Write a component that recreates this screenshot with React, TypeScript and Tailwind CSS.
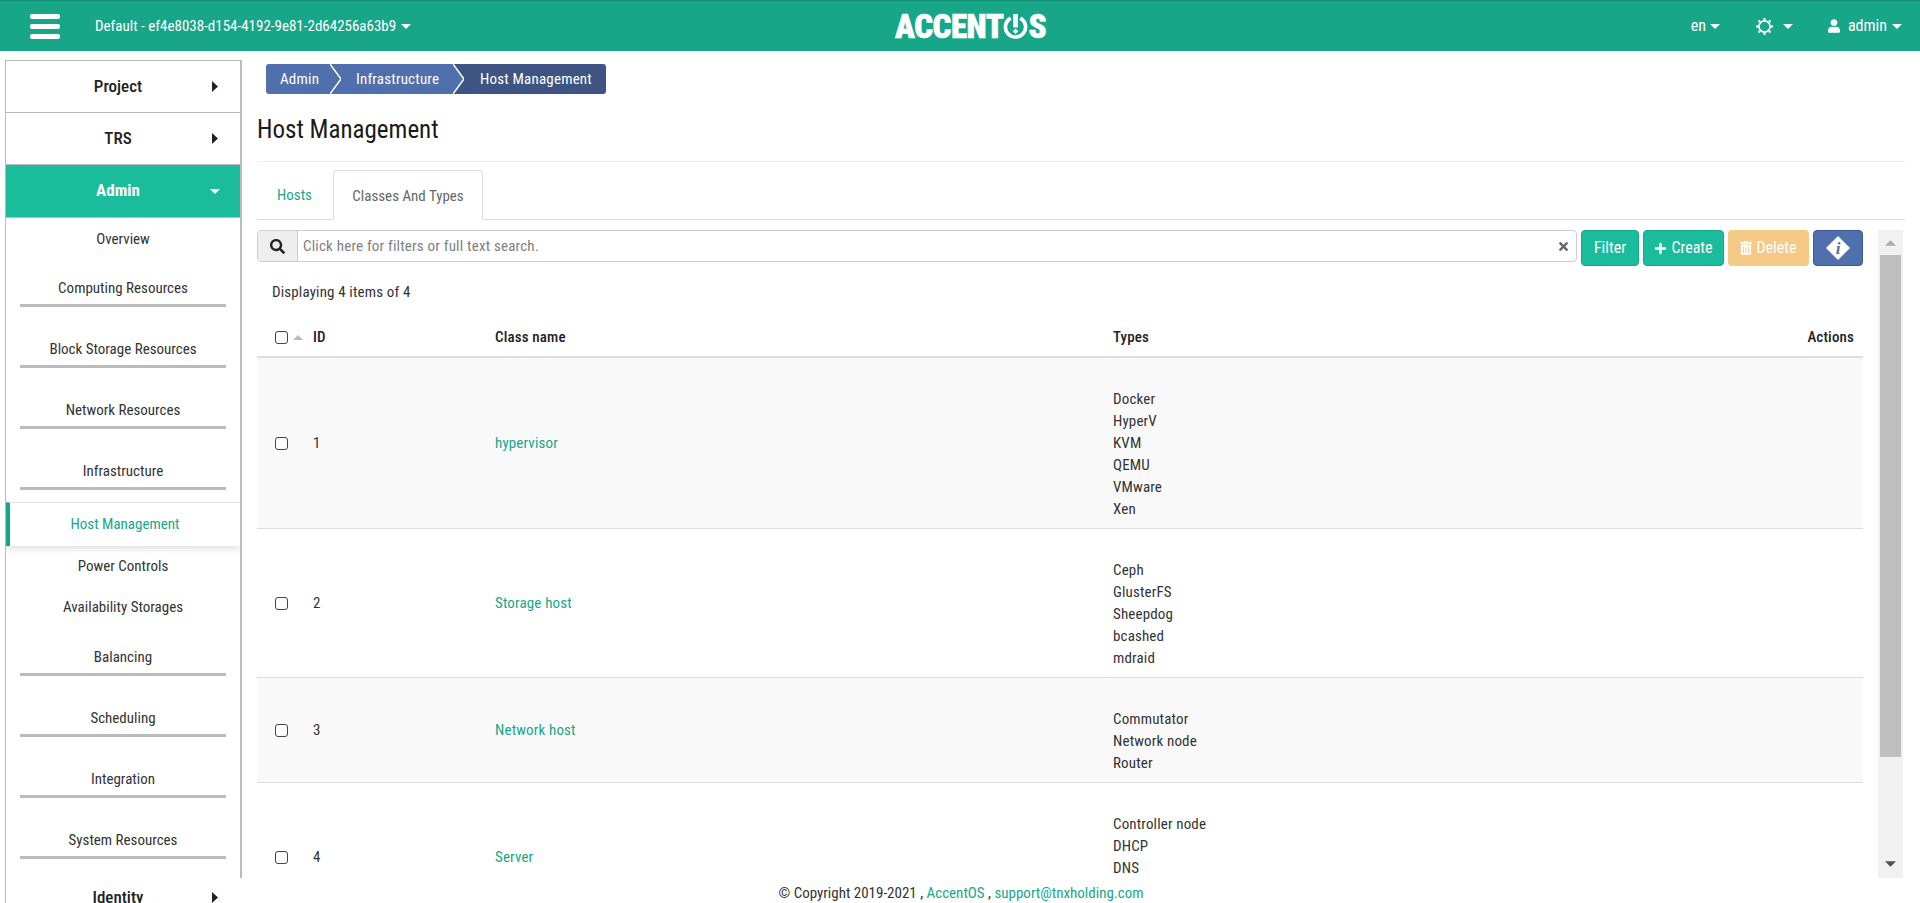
import React from "react";
import { FaSearch, FaTimes, FaPlus, FaTrashAlt, FaUser } from "react-icons/fa";

function Caret({ dir = "down", className = "" }: { dir?: "down" | "right" | "up"; className?: string }) {
  if (dir === "right")
    return (
      <svg width="6" height="11" viewBox="0 0 6 11" className={className}>
        <polygon points="0,0 6,5.5 0,11" fill="currentColor" />
      </svg>
    );
  return (
    <svg width="10" height="5" viewBox="0 0 10 5" className={className}>
      <polygon points={dir === "down" ? "0,0 10,0 5,5" : "0,5 10,5 5,0"} fill="currentColor" />
    </svg>
  );
}

function Check() {
  return <span className="block w-[13px] h-[13px] border border-[#444] rounded-[3px] bg-white" />;
}

function Top({ label, open, active, tall }: { label: string; open?: boolean; active?: boolean; tall?: boolean }) {
  return (
    <div
      className={`flex items-center ${tall ? "h-[53px]" : "h-[52px]"} shrink-0 border-b border-[#bbb] text-[17px] ${
        active ? "bg-[#1abc9c] text-white font-bold" : "bg-white text-[#222] font-medium"
      }`}
    >
      <span className="w-[180px] ml-[22px] text-center">{label}</span>
      {open ? <Caret dir="down" className="ml-[2px]" /> : <Caret dir="right" className="ml-[4px]" />}
    </div>
  );
}

function Plain({ label, first }: { label: string; first?: boolean }) {
  return (
    <div className={`h-[41px] shrink-0 ${first ? "pt-[11px]" : "pt-[10px]"} text-center text-[15px] leading-[20px] text-[#333]`}>
      {label}
    </div>
  );
}

function Ruled({ label, tight }: { label: string; tight?: boolean }) {
  return (
    <div
      className={`h-[48px] shrink-0 ${tight ? "mb-[12px]" : "mb-[13px]"} mx-[14px] pt-[19px] text-center text-[15px] leading-[20px] text-[#333] flex flex-col`}
    >
      <span>{label}</span>
      <span className="block h-[3px] bg-[#bbb] mt-[6px]" />
    </div>
  );
}

function Sidebar() {
  return (
    <aside className="ml-[5px] mt-[9px] w-[237px] shrink-0 border-l border-t border-r-2 border-[#bbb] overflow-hidden flex flex-col">
      <Top label="Project" />
      <Top label="TRS" />
      <Top label="Admin" open active tall />
      <Plain label="Overview" first />
      <Ruled label="Computing Resources" />
      <Ruled label="Block Storage Resources" />
      <Ruled label="Network Resources" />
      <Ruled label="Infrastructure" tight />
      <div className="h-[44px] shrink-0 border-l-[4px] border-l-[#18a689] border-t border-t-[#e5e5e5] shadow-[0_3px_6px_rgba(0,0,0,0.12)] flex items-center justify-center text-[15px] text-[#18a689]">
        Host Management
      </div>
      <Plain label="Power Controls" />
      <Plain label="Availability Storages" />
      <Ruled label="Balancing" />
      <Ruled label="Scheduling" />
      <Ruled label="Integration" />
      <Ruled label="System Resources" />
      <Top label="Identity" />
    </aside>
  );
}

function Chevron({ left, rightClass }: { left: string; rightClass: string }) {
  return (
    <svg width="11" height="30" viewBox="0 0 11 30" className={`block shrink-0 ${rightClass}`}>
      <polygon points="0,0 11,15 0,30" fill={left} />
      <polyline points="0,0 11,15 0,30" fill="none" stroke="#fff" strokeWidth="1.5" />
    </svg>
  );
}

function Sun() {
  const ticks = [0, 45, 90, 135, 180, 225, 270, 315];
  return (
    <svg width="17" height="17" viewBox="0 0 17 17" className="ml-[36px]">
      <circle cx="8.5" cy="8.5" r="5.6" fill="none" stroke="#fff" strokeWidth="1.7" />
      {ticks.map((a) => (
        <rect key={a} x="7.5" y="0" width="2" height="2.2" fill="#fff" transform={`rotate(${a} 8.5 8.5)`} />
      ))}
    </svg>
  );
}

const rows = [
  { id: 1, name: "hypervisor", types: ["Docker", "HyperV", "KVM", "QEMU", "VMware", "Xen"] },
  { id: 2, name: "Storage host", types: ["Ceph", "GlusterFS", "Sheepdog", "bcashed", "mdraid"] },
  { id: 3, name: "Network host", types: ["Commutator", "Network node", "Router"] },
  { id: 4, name: "Server", types: ["Controller node", "DHCP", "DNS", "\u00a0", "\u00a0"] },
];

export default function App() {
  return (
    <div className="h-[903px] w-[1920px] overflow-hidden flex flex-col bg-white [font-family:Roboto,sans-serif] font-stretch-condensed">
      <header className="h-[51px] shrink-0 bg-[#18a689] border-t border-[#149177] text-white flex items-center">
        <div className="w-[895px] shrink-0 flex items-center pl-[30px]">
          <div className="w-[30px] flex flex-col gap-[5px]">
            <span className="block h-[5px] bg-white rounded-[2px]" />
            <span className="block h-[5px] bg-white rounded-[2px]" />
            <span className="block h-[5px] bg-white rounded-[2px]" />
          </div>
          <span className="ml-[35px] text-[15px]">Default - ef4e8038-d154-4192-9e81-2d64256a63b9</span>
          <Caret className="ml-[5px]" />
        </div>
        <div className="flex items-center text-[33px] leading-none font-black tracking-[-0.5px] [-webkit-text-stroke:0.5px_white]">
          <span>ACCENT</span>
          <svg width="25" height="25" viewBox="0 0 26 26" className="shrink-0">
            <path d="M8 4.2A10.5 10.5 0 1 0 18 4.2" fill="none" stroke="#fff" strokeWidth="3.8" />
            <rect x="10.6" y="0" width="4.8" height="14" fill="#fff" />
            <rect x="11" y="16" width="4" height="4" transform="rotate(45 13 18)" fill="#fff" />
          </svg>
          <span>S</span>
        </div>
        <div className="flex-1 flex items-center justify-end">
          <span className="text-[16px]">en</span>
          <Caret className="ml-[4px]" />
          <Sun />
          <Caret className="ml-[10px]" />
          <FaUser className="ml-[35px] w-[12px] h-[14px]" />
          <span className="ml-[8px] text-[16px]">admin</span>
          <Caret className="ml-[5px] mr-[18px]" />
        </div>
      </header>

      <div className="flex-1 min-h-0 flex">
        <Sidebar />
        <div className="flex-1 min-w-0 flex flex-col">
          <div className="flex-1 min-h-0 flex flex-col pl-[15px] pr-[15px]">
            <nav className="mt-[13px] ml-[9px] flex h-[30px] w-fit text-[15px] leading-[30px] text-white tracking-[0.2px]">
              <span className="bg-[#4f6fad] rounded-l-[3px] pl-[14px] w-[64px]">Admin</span>
              <Chevron left="#4f6fad" rightClass="bg-[#4f6fad]" />
              <span className="bg-[#4f6fad] pl-[15px] w-[112px]">Infrastructure</span>
              <Chevron left="#4f6fad" rightClass="bg-[#3e5584]" />
              <span className="bg-[#3e5584] rounded-r-[3px] pl-[16px] pr-[14px]">Host Management</span>
            </nav>
            <h1 className="mt-[21px] h-[30px] text-[25px] leading-[30px] text-[#1a1a1a] font-normal">Host Management</h1>
            <div className="mt-[16px] border-t border-[#eee]" />
            <div className="mt-[8px] h-[50px] border-b border-[#ddd] flex items-end text-[15px] shrink-0">
              <span className="w-[76px] h-[50px] leading-[52px] pl-[20px] text-[#18a689]">Hosts</span>
              <span className="w-[150px] h-[50px] -mb-[1px] leading-[50px] text-center bg-white border border-[#ddd] border-b-white rounded-t-[4px] text-[#666]">
                Classes And Types
              </span>
            </div>
            <div className="mt-[10px] flex-1 min-h-0 flex gap-[15px]">
              <div className="w-[1606px] shrink-0 overflow-hidden">
                <div className="flex items-start h-[36px] gap-[4px]">
                  <div className="flex-1 h-[32px] flex border border-[#ccc] rounded-[4px] overflow-hidden">
                    <span className="w-[40px] bg-[#eee] border-r border-[#ccc] flex items-center justify-center text-[#222]">
                      <FaSearch className="w-[15px] h-[15px]" />
                    </span>
                    <span className="flex-1 pl-[5px] leading-[30px] text-[15px] tracking-[0.2px] text-[#808080]">Click here for filters or full text search.</span>
                    <span className="w-[26px] flex items-center justify-center text-[#666]">
                      <FaTimes className="w-[13px] h-[13px]" />
                    </span>
                  </div>
                  <button className="w-[58px] h-[36px] bg-[#1abc9c] border border-[#17a689] rounded-[4px] text-white text-[16px]">Filter</button>
                  <button className="w-[81px] h-[36px] bg-[#1abc9c] border border-[#17a689] rounded-[4px] text-white text-[16px] flex items-center justify-center gap-[4px]">
                    <FaPlus className="w-[13px] h-[13px]" />
                    Create
                  </button>
                  <button className="w-[81px] h-[36px] bg-[#f5c986] rounded-[4px] text-white text-[16px] flex items-center justify-center gap-[4px]">
                    <FaTrashAlt className="w-[12px] h-[14px]" />
                    Delete
                  </button>
                  <button className="w-[50px] h-[36px] bg-[#4f6fad] border border-[#3e5a93] rounded-[4px] flex items-center justify-center">
                    <svg width="24" height="24" viewBox="0 0 24 24">
                      <polygon points="12,0 24,12 12,24 0,12" fill="#fff" />
                      <text x="12" y="18" textAnchor="middle" fontSize="17" fontWeight="700" fontStyle="italic" fill="#4f6fad" fontFamily="Liberation Serif, serif">i</text>
                    </svg>
                  </button>
                </div>
                <p className="mt-[16px] pl-[15px] h-[20px] leading-[20px] text-[15px] tracking-[0.15px] text-[#333]">Displaying 4 items of 4</p>
                <table className="mt-[17px] w-full table-fixed border-collapse text-[15px] tracking-[0.15px] text-[#333]">
                  <colgroup>
                    <col className="w-[48px]" />
                    <col className="w-[182px]" />
                    <col className="w-[618px]" />
                    <col />
                    <col className="w-[100px]" />
                  </colgroup>
                  <thead>
                    <tr className="h-[38px] border-b-2 border-[#ddd] text-[#222]">
                      <th className="pl-[18px] font-medium text-left">
                        <span className="flex items-center gap-[5px]">
                          <Check />
                          <Caret dir="up" className="text-[#bbb]" />
                        </span>
                      </th>
                      <th className="pl-[8px] text-left font-medium">ID</th>
                      <th className="pl-[8px] text-left font-medium">Class name</th>
                      <th className="pl-[8px] text-left font-medium">Types</th>
                      <th className="pr-[9px] text-right font-medium">Actions</th>
                    </tr>
                  </thead>
                  <tbody>
                    {rows.map((r, i) => (
                      <tr key={r.id} className={`border-b border-[#ddd] ${i % 2 === 0 ? "bg-[#f9f9f9]" : "bg-white"}`}>
                        <td className="pl-[18px]">
                          <Check />
                        </td>
                        <td className="pl-[8px]">{r.id}</td>
                        <td className="pl-[8px] text-[#18a689]">{r.name}</td>
                        <td className="pl-[8px] pt-[30px] pb-[8px] leading-[22px]">
                          {r.types.map((t, k) => (
                            <div key={k}>{t}</div>
                          ))}
                        </td>
                        <td />
                      </tr>
                    ))}
                  </tbody>
                </table>
              </div>
              <div className="w-[25px] shrink-0 bg-[#f1f1f1] flex flex-col items-center">
                <div className="h-[25px] flex items-center justify-center text-[#aaa]">
                  <Caret dir="up" className="w-[11px] h-[6px]" />
                </div>
                <div className="w-[21px] h-[502px] bg-[#bfbfbf]" />
                <div className="flex-1 flex items-end justify-center pb-[11px] text-[#505050]">
                  <Caret className="w-[11px] h-[6px]" />
                </div>
              </div>
            </div>
          </div>
          <footer className="h-[25px] shrink-0 -ml-[2px] relative z-10 bg-white pr-[238px] pt-[3px] text-center text-[15px] leading-[25px] text-[#333]">
            © Copyright 2019-2021 , <span className="text-[#18a689]">AccentOS</span> , <span className="text-[#18a689]">support@tnxholding.com</span>
          </footer>
        </div>
      </div>
    </div>
  );
}
